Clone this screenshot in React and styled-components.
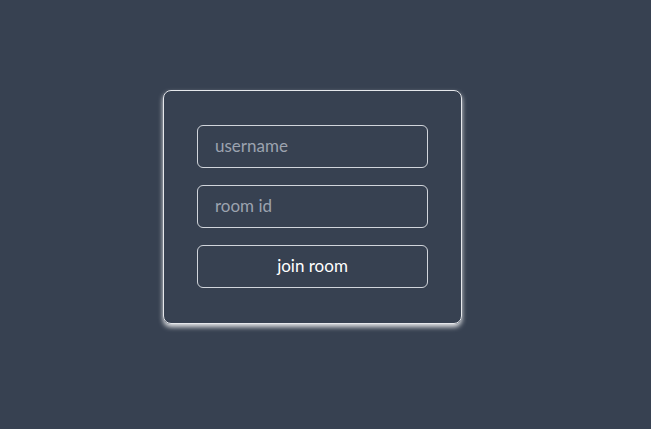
import React from "react";
import styled, { createGlobalStyle } from "styled-components";

const Global = createGlobalStyle`
  html, body { margin: 0; padding: 0; background: #374151; }
  body { font-family: Lato, "Liberation Sans", sans-serif; }
`;

const Page = styled.div`
  width: 651px;
  height: 429px;
  box-sizing: border-box;
  padding: 90px 0 0 163px;
  background: #374151;
`;

const Card = styled.div`
  width: 299px;
  height: 234px;
  box-sizing: border-box;
  padding: 34px 33px;
  border: 1px solid #e5e7eb;
  border-radius: 8px;
  box-shadow: 0 3px 5px rgba(255, 255, 255, 0.85);
  display: flex;
  flex-direction: column;
  gap: 17px;
`;

const Field = styled.input`
  height: 43px;
  box-sizing: border-box;
  width: 100%;
  padding: 0 17px 2px;
  border: 1px solid #d1d5db;
  border-radius: 6px;
  background: transparent;
  color: #f3f4f6;
  font-family: inherit;
  font-size: 17px;
  outline: none;
  &::placeholder { color: #9ca3af; }
`;

const Button = styled.button`
  height: 43px;
  width: 100%;
  box-sizing: border-box;
  padding: 0 0 2px;
  border: 1px solid #d1d5db;
  border-radius: 6px;
  background: transparent;
  color: #ffffff;
  font-family: inherit;
  font-size: 17px;
  cursor: pointer;
`;

export default function App() {
  return (
    <>
      <Global />
      <Page>
        <Card>
          <Field placeholder="username" />
          <Field placeholder="room id" />
          <Button>join room</Button>
        </Card>
      </Page>
    </>
  );
}
